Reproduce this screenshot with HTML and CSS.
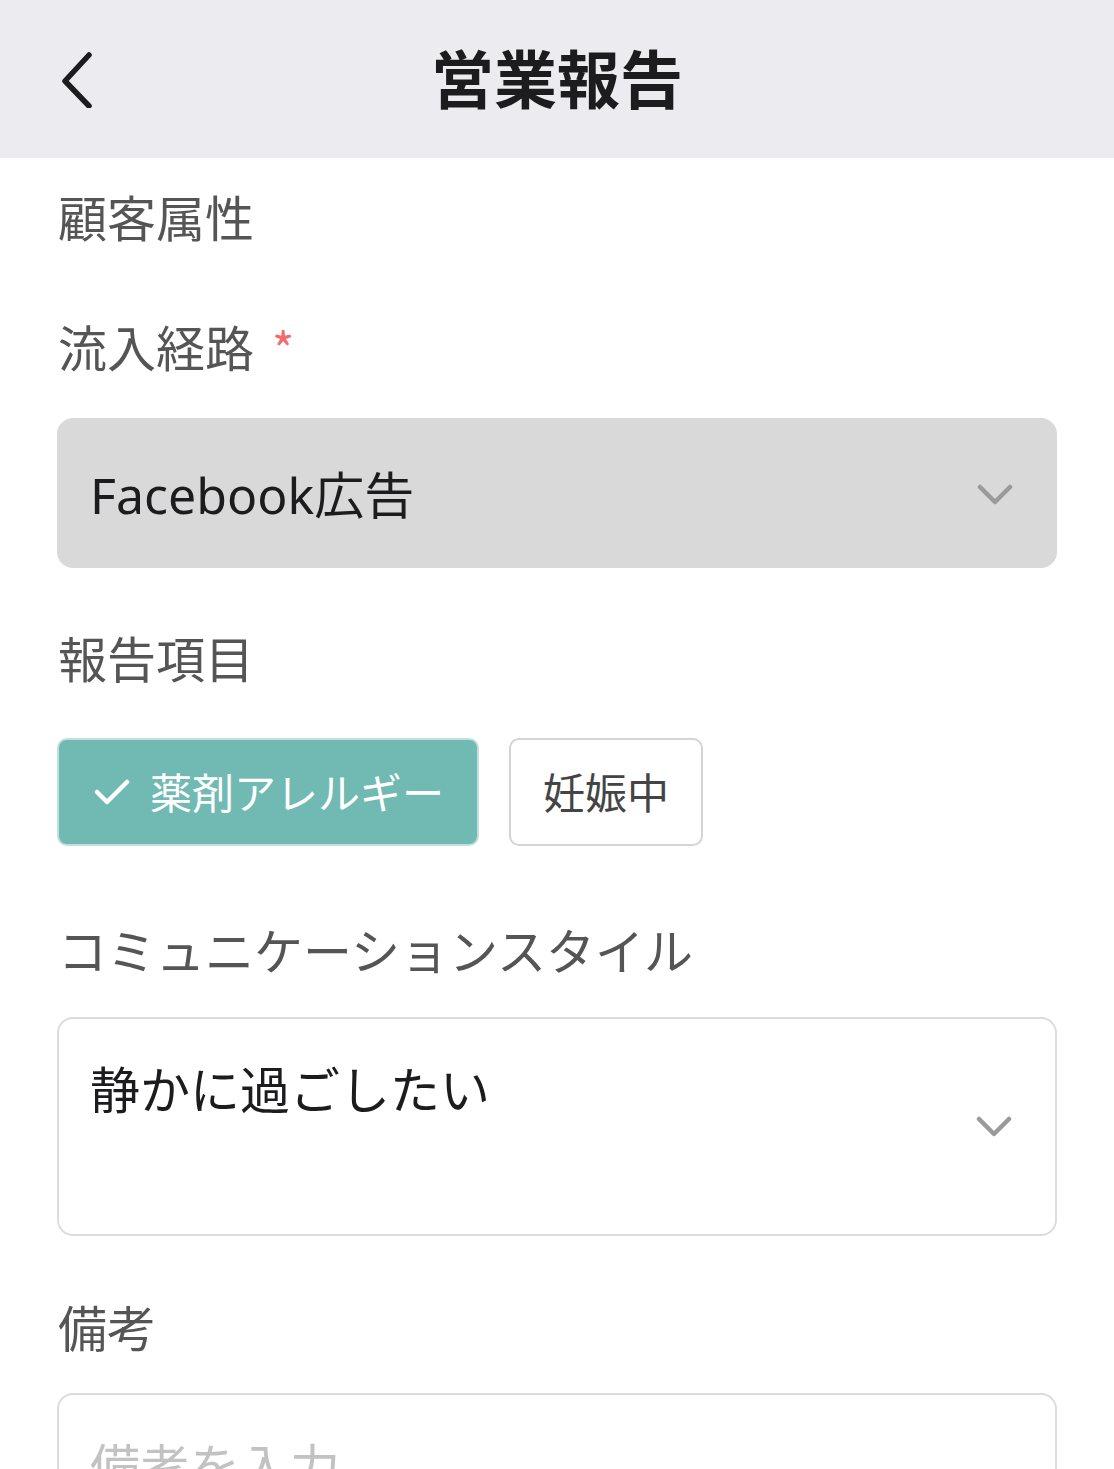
FILE: index.html
```html
<!DOCTYPE html>
<html lang="ja">
<head>
<meta charset="utf-8">
<title>営業報告</title>
<link rel="stylesheet" href="styles.css">
</head>
<body>
<header class="nav">
  <button class="nav-back" aria-label="戻る">
    <svg width="40" height="60" viewBox="0 0 40 60"><path d="M31 7 L7 33 L31 58" fill="none" stroke="#1c1c1e" stroke-width="5.5" stroke-linecap="round" stroke-linejoin="round"/></svg>
  </button>
  <h1 class="nav-title">営業報告</h1>
</header>
<main class="form">
  <div class="section-title">顧客属性</div>

  <div class="label label-route">流入経路<span class="req">*</span></div>
  <div class="select select-filled">
    <span class="select-value">Facebook広告</span>
    <svg class="chev" width="36" height="22" viewBox="0 0 36 22"><path d="M3 3 L18 18 L33 3" fill="none" stroke="#9a9a9a" stroke-width="4.5" stroke-linecap="round" stroke-linejoin="round"/></svg>
  </div>

  <div class="label label-items">報告項目</div>
  <div class="chips">
    <div class="chip chip-on">
      <svg class="check" width="36" height="28" viewBox="0 0 36 28"><path d="M3 14 L13 24 L33 4" fill="none" stroke="#fff" stroke-width="4.5" stroke-linecap="round" stroke-linejoin="round"/></svg>
      <span>薬剤アレルギー</span>
    </div>
    <div class="chip">妊娠中</div>
  </div>

  <div class="label label-style">コミュニケーションスタイル</div>
  <div class="select select-tall">
    <span class="select-value">静かに過ごしたい</span>
    <svg class="chev" width="36" height="22" viewBox="0 0 36 22"><path d="M3 3 L18 18 L33 3" fill="none" stroke="#9a9a9a" stroke-width="4.5" stroke-linecap="round" stroke-linejoin="round"/></svg>
  </div>

  <div class="label label-notes">備考</div>
  <div class="textarea">
    <span class="placeholder">備考を入力</span>
  </div>
</main>
</body>
</html>
```
FILE: styles.css
```css
* { box-sizing: border-box; }
html, body {
  margin: 0;
  padding: 0;
  background: #ffffff;
  font-family: "Noto Sans", "Noto Sans CJK JP", sans-serif;
  overflow: hidden;
}
.nav {
  height: 158px;
  background: #ececf0;
  display: flex;
  align-items: center;
  justify-content: center;
  position: relative;
}
.nav-back {
  position: absolute;
  left: 58px;
  top: 48px;
  background: none;
  border: 0;
  padding: 0;
  width: 40px;
  height: 60px;
}
.nav-back svg { display: block; }
.nav-title {
  margin: 0;
  font-size: 63px;
  font-weight: 700;
  color: #1c1c1e;
  line-height: 1;
  font-family: "Noto Sans CJK JP", sans-serif;
  padding-bottom: 8px;
}
.form {
  padding: 22px 57px 0 57px;
  display: flex;
  flex-direction: column;
}
.section-title, .label {
  font-size: 49px;
  line-height: 72px;
  color: #555555;
  font-family: "Noto Sans CJK JP", sans-serif;
  padding-left: 1px;
}
.label-route { margin-top: 58px; margin-bottom: 36px; display: flex; align-items: flex-start; }
.req {
  color: #f06b6b;
  font-size: 48px;
  line-height: 50px;
  margin-left: 18px;
  margin-top: 12px;
}
.label-items { margin-top: 53px; margin-bottom: 45px; }
.label-style { margin-top: 67px; margin-bottom: 32px; }
.label-notes { margin-top: 54px; margin-bottom: 31px; }

.select {
  width: 1000px;
  border-radius: 16px;
  display: flex;
  align-items: center;
  justify-content: space-between;
  padding: 0 44px 0 33px;
}
.select-value {
  font-size: 50px;
  color: #1c1c1e;
  line-height: 72px;
}
.select-filled {
  height: 150px;
  background: #d9d9d9;
}
.select-filled .select-value { margin-top: 4px; }
.select-tall {
  height: 219px;
  background: #fff;
  border: 2px solid #dcdcdc;
  position: relative;
  align-items: flex-start;
  padding-top: 35px;
  padding-left: 31px;
}
.select-tall .chev {
  position: absolute;
  right: 43px;
  top: 97px;
}
.chev { display: block; }
.select-filled .chev { margin-top: 4px; }

.chips {
  display: flex;
  gap: 30px;
}
.chip {
  height: 108px;
  border: 2px solid #d4d4d4;
  border-radius: 10px;
  display: flex;
  align-items: center;
  padding: 0 32px 3px 32px;
  font-size: 42px;
  color: #444444;
  background: #fff;
  font-family: "Noto Sans CJK JP", sans-serif;
}
.chip-on {
  background: #70bab3;
  border-color: #c3dfdb;
  color: #ffffff;
  padding: 0 33px 3px 35px;
  gap: 20px;
}
.check { display: block; margin-top: 3px; }

.textarea {
  width: 1000px;
  height: 220px;
  border: 2px solid #dcdcdc;
  border-radius: 16px;
  padding: 33px 31px;
}
.placeholder {
  font-size: 50px;
  line-height: 72px;
  color: #c2c2c2;
  font-family: "Noto Sans CJK JP", sans-serif;
}
```
